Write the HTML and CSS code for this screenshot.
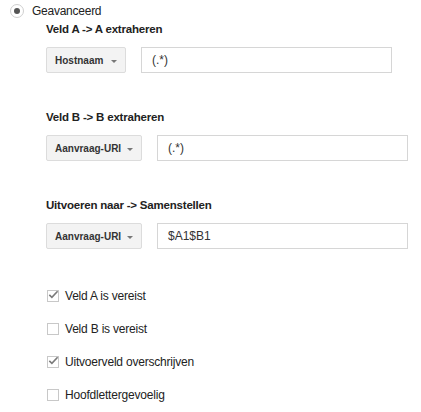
FILE: index.html
```html
<!DOCTYPE html>
<html>
<head>
<meta charset="utf-8">
<link rel="stylesheet" href="styles.css">
</head>
<body>
<div class="page">
  <div class="radio-row">
    <span class="radio"><span class="dot"></span></span>
    <span class="radio-label">Geavanceerd</span>
  </div>
  <div class="content">
    <div class="field">
      <div class="field-label">Veld A -&gt; A extraheren</div>
      <div class="field-row">
        <div class="select s-host"><span>Hostnaam</span><span class="arrow"></span></div>
        <div class="input">(.*)</div>
      </div>
    </div>
    <div class="field">
      <div class="field-label">Veld B -&gt; B extraheren</div>
      <div class="field-row">
        <div class="select s-uri"><span>Aanvraag-URI</span><span class="arrow"></span></div>
        <div class="input">(.*)</div>
      </div>
    </div>
    <div class="field">
      <div class="field-label">Uitvoeren naar -&gt; Samenstellen</div>
      <div class="field-row">
        <div class="select s-uri"><span>Aanvraag-URI</span><span class="arrow"></span></div>
        <div class="input">$A1$B1</div>
      </div>
    </div>
    <div class="checks">
      <div class="check-row"><span class="box checked"><svg viewBox="0 0 13 13" width="13" height="13"><path d="M2.3 6.8 L4.9 9.3 L10.6 3.2" fill="none" stroke="#7a7a7a" stroke-width="1.6"/></svg></span><span>Veld A is vereist</span></div>
      <div class="check-row"><span class="box"></span><span>Veld B is vereist</span></div>
      <div class="check-row"><span class="box checked"><svg viewBox="0 0 13 13" width="13" height="13"><path d="M2.3 6.8 L4.9 9.3 L10.6 3.2" fill="none" stroke="#7a7a7a" stroke-width="1.6"/></svg></span><span>Uitvoerveld overschrijven</span></div>
      <div class="check-row"><span class="box"></span><span>Hoofdlettergevoelig</span></div>
    </div>
  </div>
</div>
</body>
</html>
```
FILE: styles.css
```css
html, body {
  margin: 0;
  padding: 0;
  background: #fff;
}
body {
  font-family: "Liberation Sans", Arial, sans-serif;
  color: #222;
  font-size: 12px;
}
.page {
  padding: 3px 0 0 10px;
}
.radio-row {
  display: flex;
  align-items: center;
  height: 15px;
}
.radio {
  width: 12px;
  height: 12px;
  border: 1px solid #cfcfcf;
  border-radius: 50%;
  display: flex;
  align-items: center;
  justify-content: center;
  box-sizing: content-box;
}
.dot {
  width: 6px;
  height: 6px;
  border-radius: 50%;
  background: #555;
}
.radio-label {
  margin-left: 8px;
  font-size: 12px;
  letter-spacing: -0.25px;
  color: #222;
}
.content {
  padding-left: 36px;
}
.field {
  margin-bottom: 33px;
}
.field-label {
  font-weight: bold;
  font-size: 11.5px;
  letter-spacing: -0.2px;
  color: #222;
  height: 29px;
  line-height: 22px;
}
.field-row {
  display: flex;
  align-items: center;
  gap: 15px;
}
.select {
  flex: none;
  white-space: nowrap;
  height: 26px;
  box-sizing: border-box;
  border: 1px solid #dcdcdc;
  border-radius: 2px;
  background: #f3f3f3;
  display: flex;
  align-items: center;
  justify-content: space-between;
  padding: 0 8px 0 8px;
  font-size: 10px;
  font-weight: bold;
  color: #333;
}
.s-host { width: 80px; }
.s-uri { width: 96px; }
.arrow {
  flex: none;
  width: 0;
  height: 0;
  border-left: 3px solid transparent;
  border-right: 3px solid transparent;
  border-top: 3px solid #777;
  margin-top: 2px;
}
.input {
  flex: none;
  width: 251px;
  height: 26px;
  box-sizing: border-box;
  border: 1px solid #d6d6d6;
  padding: 0 10px;
  display: flex;
  align-items: center;
  font-size: 12px;
  color: #333;
}
.checks {
  margin-top: -3px;
}
.check-row {
  display: flex;
  align-items: center;
  height: 33px;
  font-size: 12px;
  letter-spacing: -0.2px;
  color: #222;
}
.box {
  width: 10px;
  height: 10px;
  border: 1px solid #c8c8c8;
  box-sizing: content-box;
  margin-left: 1px;
  margin-right: 6px;
  position: relative;
  flex: none;
}
.box svg {
  position: absolute;
  left: -1px;
  top: -3px;
}
```
